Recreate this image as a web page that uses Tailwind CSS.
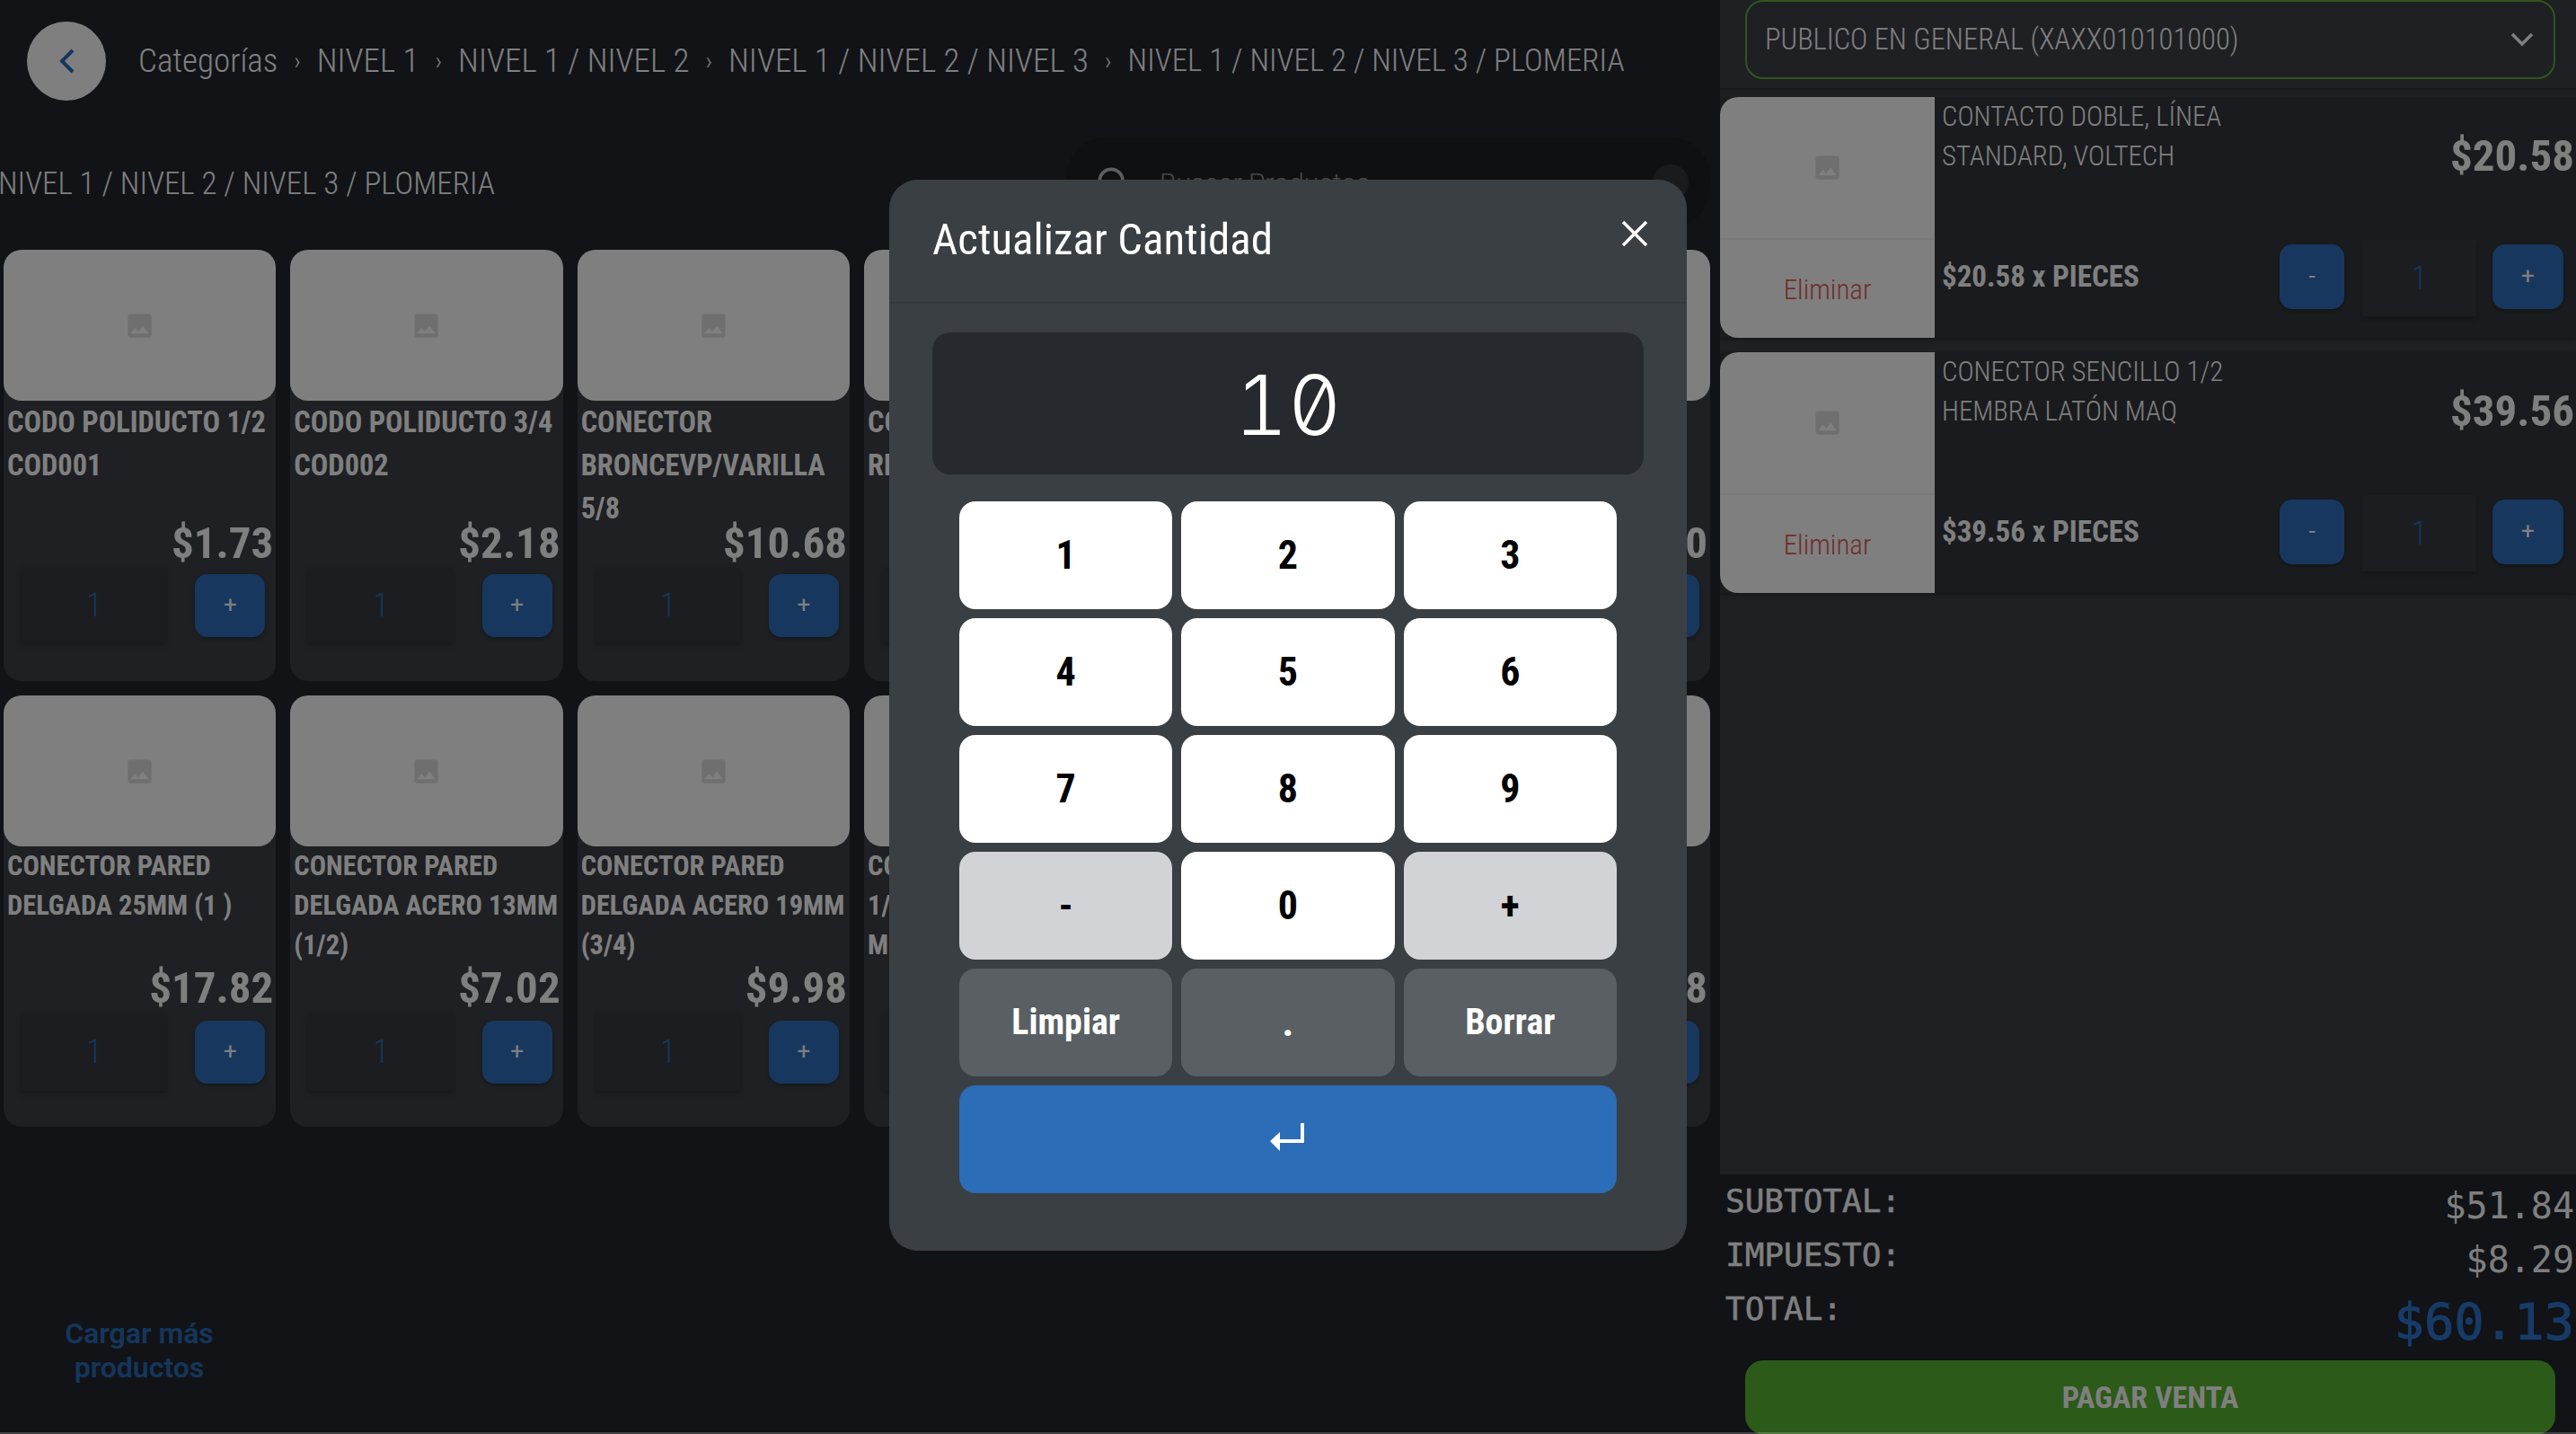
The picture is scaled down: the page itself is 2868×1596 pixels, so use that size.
<!DOCTYPE html>
<html lang="es">
  <head>
    <meta charset="UTF-8" />
    <title>Punto de venta</title>
    <script src="https://cdn.jsdelivr.net/npm/@tailwindcss/browser@4"></script>
  </head>
  <body class="w-[2868px] h-[1596px] overflow-hidden bg-[#23272e] text-white font-['Roboto',sans-serif]">
    <div class="flex h-full">
      <!-- Catalogo -->
      <main class="w-[1915px] shrink-0 flex flex-col">
        <nav class="flex items-center h-[88px] mt-6 pl-[30px] gap-[36px]">
          <button class="w-[88px] h-[88px] rounded-full bg-white flex items-center justify-center">
            <svg class="w-6 h-9 text-[#2b6db6]" viewBox="0 0 24 36" fill="none" stroke="currentColor" stroke-width="4"><path d="M19 6 7 18l12 12" /></svg>
          </button>
          <div class="flex items-center gap-[18px] text-[37px] font-light font-stretch-condensed whitespace-nowrap">
            <span>Categorías</span><span class="text-[28px]">›</span>
            <span>NIVEL 1</span><span class="text-[28px]">›</span>
            <span>NIVEL 1 / NIVEL 2</span><span class="text-[28px]">›</span>
            <span>NIVEL 1 / NIVEL 2 / NIVEL 3</span><span class="text-[28px]">›</span>
            <span class="text-[35px]">NIVEL 1 / NIVEL 2 / NIVEL 3 / PLOMERIA</span>
          </div>
        </nav>
        <div class="flex items-center justify-between h-[100px] mt-[41px]">
          <h1 class="text-[35px] font-light font-stretch-condensed whitespace-nowrap -ml-[2px] mt-1">NIVEL 1 / NIVEL 2 / NIVEL 3 / PLOMERIA</h1>
          <div class="w-[717px] h-[100px] mr-[11px] rounded-[44px] bg-[#1e2024] flex items-center pl-[30px] pr-6 text-[30px] text-white/50">
            <svg class="w-11 h-11 text-white/70" viewBox="0 0 24 24" fill="none" stroke="currentColor" stroke-width="2"><circle cx="11" cy="11" r="7" /><path d="m16 16 5 5" /></svg>
            <span class="ml-[30px] font-light">Buscar Productos</span>
            <span class="ml-auto w-10 h-10 rounded-full bg-white/10"></span>
          </div>
        </div>
        <div id="grid" class="grid grid-cols-6 gap-x-4 gap-y-4 pl-1 pr-[11px] mt-[25px]"></div>
        <button class="w-[310px] mt-[211px] text-[32px] leading-[38px] font-semibold text-[#2b6db6] font-stretch-[88%]">Cargar más productos</button>
      </main>

      <!-- Carrito -->
      <aside class="flex-1 min-w-0 flex flex-col overflow-hidden">
        <div class="h-[1307px] bg-[#3c4046] flex flex-col">
          <div class="h-[100px] shrink-0 border-b-2 border-[#2f3237] pl-[28px] pr-[23px]">
            <div class="h-[88px] rounded-[20px] border-2 border-[#7cf43c]/60 flex items-center justify-between pl-[20px] pr-[21px] text-[32.600px] font-light font-stretch-condensed">
              <span>PUBLICO EN GENERAL (XAXX010101000)</span>
              <svg class="w-7 h-5" viewBox="0 0 28 20" fill="none" stroke="currentColor" stroke-width="3.500"><path d="m3 4 11 11L25 4" /></svg>
            </div>
          </div>
          <div id="cart" class="mt-[8px] flex flex-col gap-4"></div>
        </div>
        <div class="flex-1 pl-[6px] pr-[2px] font-['DejaVu_Sans_Mono',monospace]">
          <div class="flex justify-between h-[60px] mt-[5px]">
            <span class="text-[36px] leading-[50px] [-webkit-text-stroke:0.5px]">SUBTOTAL:</span><span class="text-[40px] leading-[60px]">$51.84</span>
          </div>
          <div class="flex justify-between h-[60px]">
            <span class="text-[36px] leading-[50px] [-webkit-text-stroke:0.5px]">IMPUESTO:</span><span class="text-[40px] leading-[60px]">$8.29</span>
          </div>
          <div class="flex justify-between h-[78px]">
            <span class="text-[36px] leading-[50px] [-webkit-text-stroke:0.5px]">TOTAL:</span><span class="text-[55.500px] leading-[78px] text-[#2f77d0] [-webkit-text-stroke:1px]">$60.13</span>
          </div>
        </div>
        <button class="h-[82px] shrink-0 ml-[28px] mr-[23px] rounded-[20px] bg-[#58b430] text-[34px] font-bold font-stretch-condensed">PAGAR VENTA</button>
      </aside>
    </div>

    <!-- Modal cantidad -->
    <div class="fixed inset-0 bg-black/50 flex items-start justify-center pt-[200px]">
      <div class="w-[888px] h-[1192px] rounded-[32px] bg-[#3a3f43]">
        <div class="h-[138px] border-b-2 border-[#33383c] flex justify-between pl-[48px] pr-[42px] pt-[36px]">
          <h2 class="text-[49px] leading-[62px] font-stretch-condensed">Actualizar Cantidad</h2>
          <svg class="w-8 h-8 mt-[8px]" viewBox="0 0 32 32" fill="none" stroke="currentColor" stroke-width="3.500"><path d="m3 3 26 26M29 3 3 29" /></svg>
        </div>
        <div class="h-[158px] mt-[32px] mx-[48px] pt-1 rounded-[20px] bg-[#26292d] flex items-center justify-center text-[92px] font-light font-['Inter',sans-serif] slashed-zero tabular-nums">10</div>
        <div class="grid grid-cols-3 gap-x-[10px] gap-y-[10px] auto-rows-[120px] w-[732px] mx-auto mt-[30px] text-[44px] font-bold font-stretch-condensed text-black">
          <button class="rounded-[18px] bg-white">1</button>
          <button class="rounded-[18px] bg-white">2</button>
          <button class="rounded-[18px] bg-white">3</button>
          <button class="rounded-[18px] bg-white">4</button>
          <button class="rounded-[18px] bg-white">5</button>
          <button class="rounded-[18px] bg-white">6</button>
          <button class="rounded-[18px] bg-white">7</button>
          <button class="rounded-[18px] bg-white">8</button>
          <button class="rounded-[18px] bg-white">9</button>
          <button class="rounded-[18px] bg-[#d1d3d6]">-</button>
          <button class="rounded-[18px] bg-white">0</button>
          <button class="rounded-[18px] bg-[#d1d3d6]">+</button>
          <button class="rounded-[18px] bg-[#5a5f63] text-white text-[40px]">Limpiar</button>
          <button class="rounded-[18px] bg-[#5a5f63] text-white">.</button>
          <button class="rounded-[18px] bg-[#5a5f63] text-white text-[40px]">Borrar</button>
          <button class="col-span-3 rounded-[18px] bg-[#2b6db6] flex items-center justify-center">
            <svg class="w-10 h-8 -mt-1" viewBox="0 0 40 32" fill="white"><path d="M34 0h4v22H11v9L0 20 11 10v8h23z" /></svg>
          </button>
        </div>
      </div>
    </div>
    <div class="fixed inset-x-0 bottom-0 h-[2px] bg-white/20"></div>

    <script>
      const icon = '<svg class="w-[35px] h-[35px] text-[#dedede]" viewBox="0 0 24 24" fill="currentColor"><path d="M21 19V5c0-1.100-.9-2-2-2H5c-1.100 0-2 .9-2 2v14c0 1.100.9 2 2 2h14c1.100 0 2-.9 2-2zM8.500 13.500l2.500 3.010L14.500 12l4.500 6H5l3.500-4.500z"/></svg>';
      const box = "shadow-[0_3px_6px_rgba(0,0,0,0.25)] bg-[#383b40] flex items-center justify-center font-light font-stretch-condensed text-[36px] text-[#2b6db6]";
      const blue = "rounded-[14px] bg-[#2e6ebe] shadow-[0_2px_4px_rgba(0,0,0,0.3)] flex items-center justify-center text-[26px]";

      const rowOne = [
        ["CODO POLIDUCTO 1/2 COD001", "$1.73"],
        ["CODO POLIDUCTO 3/4 COD002", "$2.18"],
        ["CONECTOR BRONCEVP/VARILLA 5/8", "$10.68"],
        ["CONECTOR<br />REDUCCIÓN 1/2", "$8.40"],
        ["CONECTOR COBRE 3/4", "$11.35"],
        ["CONECTOR LATÓN", "$14.50"],
      ];
      const rowTwo = [
        ["CONECTOR PARED DELGADA 25MM (1 )", "$17.82"],
        ["CONECTOR PARED DELGADA ACERO 13MM (1/2)", "$7.02"],
        ["CONECTOR PARED DELGADA ACERO 19MM (3/4)", "$9.98"],
        ["CONECTOR PARED<br />1/2 PULGADA<br />MACHO", "$6.75"],
        ["CONECTOR PARED DELGADA 32MM", "$21.40"],
        ["CONECTOR PARED", "$5.48"],
      ];

      function card([name, price], first) {
        const title = first
          ? "h-[132px] text-[32.400px] leading-[48px]"
          : "h-[131px] text-[30.500px] leading-[44px]";
        const qty = first ? "h-[83px]" : "h-[87px]";
        return `<article class="h-[480px] rounded-[20px] bg-[#3c4046] flex flex-col">
          <div class="h-[168px] shrink-0 rounded-[20px] bg-white flex items-center justify-center">${icon}</div>
          <p class="${title} px-1 font-bold font-stretch-condensed">${name}</p>
          <p class="h-[50px] leading-[54px] text-right pr-[3px] text-[49px] font-bold font-stretch-condensed">${price}</p>
          <div class="mt-1 pl-5 pr-3 flex items-center justify-between">
            <div class="${qty} w-[162px] ${box}">1</div>
            <button class="h-[70px] w-[78px] ${blue}">+</button>
          </div>
        </article>`;
      }

      function cartItem([name1, name2, price, unit]) {
        return `<article class="h-[268px] bg-[#34373c] shadow-[0_2px_4px_rgba(0,0,0,0.3)] flex">
          <div class="w-[239px] shrink-0 rounded-l-[20px] bg-white flex flex-col">
            <div class="h-[159px] shrink-0 border-b-2 border-[#f0f0f0] flex items-center justify-center">${icon}</div>
            <div class="flex-1 pt-1 flex items-center justify-center text-[31px] font-light font-stretch-condensed text-[#e25a55]">Eliminar</div>
          </div>
          <div class="flex-1 pl-2 pr-[2px] min-w-0">
            <div class="h-[159px] flex justify-between">
              <p class="text-[30.800px] leading-[44px] font-light font-stretch-condensed">${name1}<br />${name2}</p>
              <p class="h-[132px] flex items-center text-[49px] font-bold font-stretch-condensed">${price}</p>
            </div>
            <div class="h-[85px] flex items-center">
              <p class="text-[33px] font-bold font-stretch-condensed -mt-1">${unit} x PIECES</p>
              <button class="ml-auto w-[72px] h-[72px] ${blue} -mt-1">-</button>
              <div class="ml-[20px] w-[127px] h-[85px] ${box}">1</div>
              <button class="ml-[18px] mr-[12px] w-[79px] h-[72px] ${blue} -mt-1">+</button>
            </div>
          </div>
        </article>`;
      }

      document.getElementById("grid").innerHTML =
        rowOne.map((p) => card(p, true)).join("") + rowTwo.map((p) => card(p, false)).join("");
      document.getElementById("cart").innerHTML = [
        ["CONTACTO DOBLE, LÍNEA", "STANDARD, VOLTECH", "$20.58", "$20.58"],
        ["CONECTOR SENCILLO 1/2", "HEMBRA LATÓN MAQ", "$39.56", "$39.56"],
      ].map(cartItem).join("");
    </script>
  </body>
</html>
